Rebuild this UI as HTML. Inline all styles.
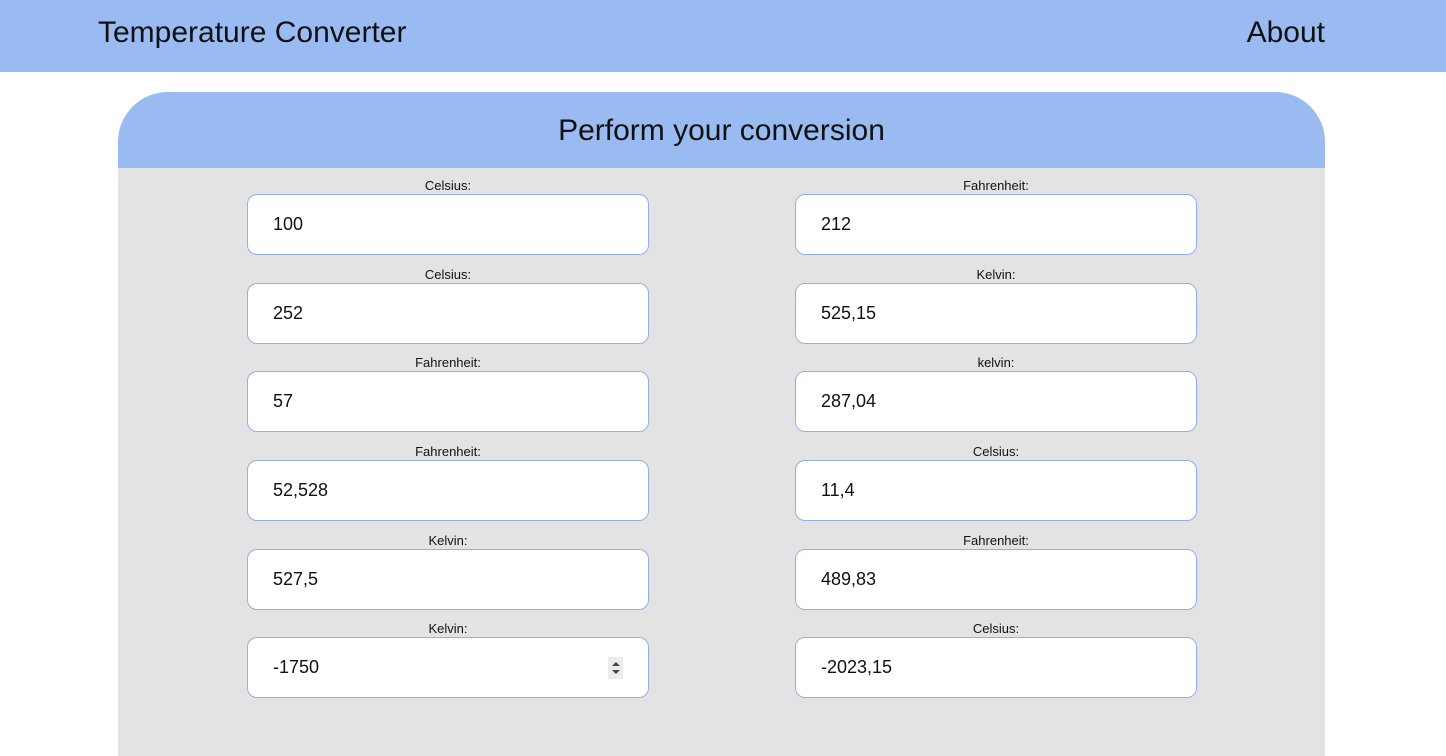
<!DOCTYPE html>
<html><head><style>
*{box-sizing:border-box;margin:0;padding:0}
html,body{width:1446px;height:756px;overflow:hidden}
body{background:#fff;font-family:"Liberation Sans",sans-serif;color:#111;position:relative}
.nav{position:absolute;left:0;top:0;width:1446px;height:72px;background:#99bbf2}
.nav .t{position:absolute;left:98px;top:16px;font-size:30px}
.nav .a{position:absolute;right:121px;top:16px;font-size:30px}
.card{position:absolute;left:118px;top:92px;width:1207px;height:664px;background:#e3e3e3;border-radius:50px 50px 0 0;overflow:hidden}
.ch{height:76px;background:#99bbf2;text-align:center;font-size:30px;padding-top:22px}
.f{position:absolute;width:402px}
.f label{display:block;text-align:center;font-size:13px;height:17px;line-height:17px}
.f .in{height:61px;background:#fff;border:1px solid #8fb0ee;border-radius:10px;font-size:18px;padding:19px 0 0 25px;position:relative}
.sp{position:absolute;right:25px;top:19px;width:15px;height:22px;background:#ececec}
.sp:before{content:"";position:absolute;left:4px;top:5px;border:4px solid transparent;border-bottom:4px solid #444;border-top:0}
.sp:after{content:"";position:absolute;left:4px;top:13px;border:4px solid transparent;border-top:4px solid #444;border-bottom:0}
</style></head><body>
<div class="nav"><div class="t">Temperature Converter</div><div class="a">About</div></div>
<div class="card"><div class="ch">Perform your conversion</div></div>
<div class="f" style="left:247px;top:177px"><label>Celsius:</label><div class="in">100</div></div>
<div class="f" style="left:795px;top:177px"><label>Fahrenheit:</label><div class="in">212</div></div>
<div class="f" style="left:247px;top:266px"><label>Celsius:</label><div class="in">252</div></div>
<div class="f" style="left:795px;top:266px"><label>Kelvin:</label><div class="in">525,15</div></div>
<div class="f" style="left:247px;top:354px"><label>Fahrenheit:</label><div class="in">57</div></div>
<div class="f" style="left:795px;top:354px"><label>kelvin:</label><div class="in">287,04</div></div>
<div class="f" style="left:247px;top:443px"><label>Fahrenheit:</label><div class="in">52,528</div></div>
<div class="f" style="left:795px;top:443px"><label>Celsius:</label><div class="in">11,4</div></div>
<div class="f" style="left:247px;top:532px"><label>Kelvin:</label><div class="in">527,5</div></div>
<div class="f" style="left:795px;top:532px"><label>Fahrenheit:</label><div class="in">489,83</div></div>
<div class="f" style="left:247px;top:620px"><label>Kelvin:</label><div class="in">-1750<span class="sp"></span></div></div>
<div class="f" style="left:795px;top:620px"><label>Celsius:</label><div class="in">-2023,15</div></div>
</body></html>
